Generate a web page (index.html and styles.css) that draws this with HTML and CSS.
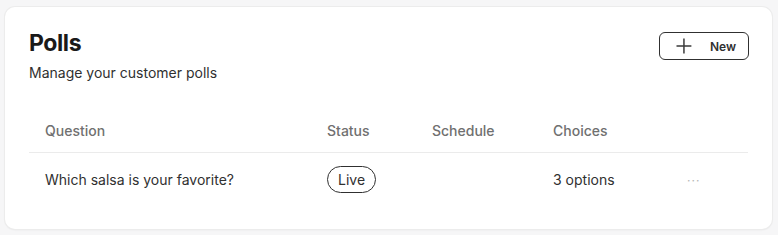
FILE: index.html
```html
<!DOCTYPE html>
<html lang="en">
<head>
  <meta charset="UTF-8" />
  <title>Polls</title>
  <link rel="stylesheet" href="styles.css">
</head>
<body>
  <div class="card">
    <div class="card-head">
      <div>
        <h1 class="title">Polls</h1>
        <p class="subtitle">Manage your customer polls</p>
      </div>
      <button class="new-btn">
        <svg width="16" height="16" viewBox="0 0 16 16" fill="none" stroke="#3a3a3a" stroke-width="1.5">
          <path d="M8 0.5v15M0.5 8h15" />
        </svg>
        <span>New</span>
      </button>
    </div>

    <table class="polls">
      <thead>
        <tr>
          <th class="col-question">Question</th>
          <th class="col-status">Status</th>
          <th class="col-schedule">Schedule</th>
          <th class="col-choices">Choices</th>
          <th class="col-actions"></th>
        </tr>
      </thead>
      <tbody>
        <tr>
          <td>Which salsa is your favorite?</td>
          <td><span class="badge">Live</span></td>
          <td></td>
          <td>3 options</td>
          <td><span class="dots">&middot;&middot;&middot;</span></td>
        </tr>
      </tbody>
    </table>
  </div>
</body>
</html>
```

FILE: styles.css
```css
html, body {
  margin: 0;
  padding: 0;
  background: #f6f6f7;
  font-family: Inter, "Noto Sans", sans-serif;
  color: #303030;
}

body {
  padding: 7px 6px 6px 5px;
}

.card {
  background: #fff;
  border-radius: 10px;
  box-shadow: 0 0 0 1px #ececec, 0 1px 2px rgba(0, 0, 0, 0.08);
  padding: 24px;
  height: 174px;
}

.card-head {
  display: flex;
  justify-content: space-between;
  align-items: flex-start;
}

.title {
  margin: 0;
  font-size: 23px;
  line-height: 24px;
  font-weight: 700;
  letter-spacing: -0.4px;
  color: #1a1a1a;
}

.subtitle {
  margin: 8px 0 0;
  font-size: 14px;
  line-height: 20px;
  color: #303030;
}

.new-btn {
  display: flex;
  align-items: center;
  gap: 18px;
  margin: 1px -1px 0 0;
  height: 28px;
  width: 90px;
  padding: 0 12px 0 16px;
  background: #fff;
  border: 1px solid #303030;
  border-radius: 6px;
  font-family: inherit;
  font-size: 12px;
  font-weight: 600;
  color: #303030;
}

.polls {
  width: 100%;
  margin-top: 25px;
  border-collapse: collapse;
  font-size: 14px;
}

.polls th {
  text-align: left;
  font-weight: 500;
  color: #707070;
  height: 44px;
  padding: 0 16px;
  border-bottom: 1px solid #ebebeb;
}

.polls td {
  height: 52px;
  padding: 0 16px;
  color: #303030;
}

.col-question { width: 250px; }
.col-status { width: 73px; }
.col-schedule { width: 89px; }
.col-choices { width: 102px; }

.badge {
  display: inline-block;
  padding: 0 10px;
  line-height: 25px;
  border: 1px solid #303030;
  border-radius: 14px;
}

.dots {
  color: #b5b5b5;
  letter-spacing: 1px;
  font-size: 12px;
}
```
